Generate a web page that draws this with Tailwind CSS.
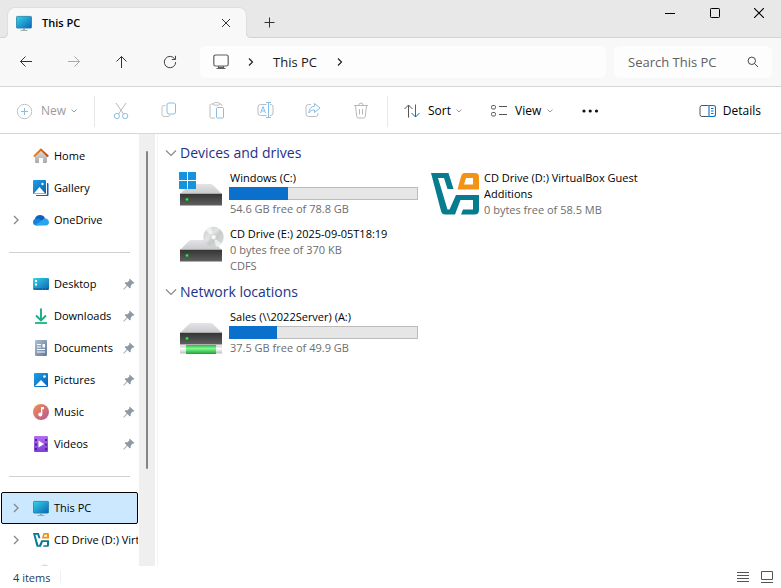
<!DOCTYPE html>
<html lang="en">
<head>
<meta charset="utf-8">
<meta name="viewport" content="width=device-width, initial-scale=1">
<title>This PC</title>
<script src="https://cdn.jsdelivr.net/npm/@tailwindcss/browser@4"></script>
</head>
<body class="flex h-screen flex-col overflow-hidden bg-white font-['Open_Sans','Noto_Sans',sans-serif] text-[11px] leading-4 text-black">

<!-- Shared symbols -->
<svg class="absolute size-0" aria-hidden="true">
  <defs>
    <linearGradient id="gScreen" x1="0" y1="0" x2="1" y2="1"><stop offset="0" stop-color="#35d6e4"/><stop offset="1" stop-color="#0b62b8"/></linearGradient>
    <linearGradient id="gBlue" x1="0" y1="0" x2="1" y2="1"><stop offset="0" stop-color="#1fa0e6"/><stop offset="1" stop-color="#0661b8"/></linearGradient>
    <linearGradient id="gGray" x1="0" y1="0" x2="0" y2="1"><stop offset="0" stop-color="#dedede"/><stop offset="1" stop-color="#a9a9a9"/></linearGradient>
    <linearGradient id="gRoof" x1="0" y1="0" x2="1" y2="0"><stop offset="0" stop-color="#f08a24"/><stop offset="1" stop-color="#c8440b"/></linearGradient>
    <linearGradient id="gDoc" x1="0" y1="0" x2="1" y2="1"><stop offset="0" stop-color="#a9bfd3"/><stop offset="1" stop-color="#62799a"/></linearGradient>
    <linearGradient id="gMusic" x1="0" y1="0" x2="1" y2="1"><stop offset="0" stop-color="#f0924c"/><stop offset="1" stop-color="#b4559a"/></linearGradient>
    <linearGradient id="gVideo" x1="0" y1="0" x2="0" y2="1"><stop offset="0" stop-color="#b46cf0"/><stop offset="1" stop-color="#7d3fd8"/></linearGradient>
    <linearGradient id="gTop" x1="0" y1="0" x2="0" y2="1"><stop offset="0" stop-color="#e3e4e8"/><stop offset="1" stop-color="#c9c9cc"/></linearGradient>
    <linearGradient id="gFront" x1="0" y1="0" x2="0" y2="1"><stop offset="0" stop-color="#333"/><stop offset="1" stop-color="#606060"/></linearGradient>
    <linearGradient id="gPipe" x1="0" y1="0" x2="0" y2="1"><stop offset="0" stop-color="#2bb84a"/><stop offset=".4" stop-color="#7dfa8c"/><stop offset="1" stop-color="#1f9e3c"/></linearGradient>
    <linearGradient id="gPipeEnd" x1="0" y1="0" x2="0" y2="1"><stop offset="0" stop-color="#c8c8c8"/><stop offset=".4" stop-color="#fff"/><stop offset="1" stop-color="#bdbdbd"/></linearGradient>
    <linearGradient id="gDisc" x1="0" y1="0" x2="1" y2="1"><stop offset="0" stop-color="#c9c9cb"/><stop offset=".4" stop-color="#e4e4e6"/><stop offset=".55" stop-color="#c6cbc8"/><stop offset="1" stop-color="#dedee0"/></linearGradient>
  </defs>
  <symbol id="pc" viewBox="0 0 16 16"><rect x=".4" y="1.4" width="15.2" height="11.7" rx="1" fill="url(#gScreen)" stroke="#1a7fa6" stroke-width=".8"/><path d="M7 13.5h2v1.8H7z" fill="#9aa5ad"/><path d="M4.5 15.4h7" stroke="#9aa5ad"/></symbol>
  <symbol id="expand" viewBox="0 0 8 10"><path d="M2 1l4 4-4 4" fill="none" stroke="#8a8a8a" stroke-width="1.4"/></symbol>
  <symbol id="caret" viewBox="0 0 8 6"><path d="M1.500 1.500l2.500 2.500 2.500-2.500" fill="none" stroke="currentColor"/></symbol>
  <symbol id="chev" viewBox="0 0 6 10"><path d="M1 1.500l3.500 3.500-3.500 3.500" fill="none" stroke="#222" stroke-width="1.200"/></symbol>
  <symbol id="group" viewBox="0 0 12 8"><path d="M1 1.500l5 5 5-5" fill="none" stroke="#8a8a8a" stroke-width="1.200"/></symbol>
  <symbol id="pin" viewBox="0 0 12 12"><path d="M6.600.6L11.400 5l-1.100.8-.6-.2-2 2.100.1 1.900-.9.9-2.500-2.400L1 11.600H.4V11l3.400-3.500-2.200-2.400.9-.9 2 .1 2-2-.2-.7z" fill="#8d99a3"/></symbol>
  <symbol id="vbox" viewBox="0 0 48 42"><path d="M0 0H17.500L22.500 16H16.500L13 5H7L16.500 36.500H18.500L25 22H48V37Q48 41.500 43.500 41.500H30L32 36.500H42V27H29.500L24 41.500H14Q11 41.500 10 38Z" fill="#077c8f"/><path fill-rule="evenodd" d="M33.500 0H44Q48 0 48 4V16.500H26.500L30 3.500Q31 0 33.500 0zM35 5L33 11.500H42V5z" fill="#f39313"/></symbol>
  <symbol id="drive" viewBox="0 0 42 24"><path d="M9 1Q10 0 11.500 0H30.500Q32 0 33 1L42 10H0z" fill="url(#gTop)"/><path d="M0 9.500H42V21.500H0z" fill="url(#gFront)"/><path d="M0 9.500H42" stroke="#aaa"/><circle cx="7" cy="15.500" r="1.900" fill="#22722f"/><circle cx="7" cy="15.500" r="1.300" fill="#31e943"/></symbol>
</svg>

<!-- Title bar -->
<header class="flex h-[38px] shrink-0 border-b border-[#d4d4d4] bg-[#e8e8e8]">
  <div class="relative mt-[7px] -mb-px ml-[7px] flex w-60 items-center rounded-t-lg border-x border-t border-[#dedede] bg-[#f8f8f8] pr-3 pl-2">
    <svg class="absolute -left-[5px] bottom-0" width="5" height="5" aria-hidden="true"><path d="M5 0V5H0V4.500Q4.500 4.500 4.500 0z" fill="#f8f8f8"/><path d="M0 4.500Q4.500 4.500 4.500 0" fill="none" stroke="#d4d4d4"/></svg>
    <svg class="absolute -right-[5px] bottom-0" width="5" height="5" aria-hidden="true"><path d="M0 0V5H5V4.500Q.5 4.500 .5 0z" fill="#f8f8f8"/><path d="M5 4.500Q.5 4.500 .5 0" fill="none" stroke="#d4d4d4"/></svg>
    <svg width="16" height="16" aria-hidden="true"><use href="#pc"/></svg>
    <span class="ml-[10px] flex-1 font-semibold">This PC</span>
    <button aria-label="Close tab" class="flex size-4 items-center justify-center"><svg width="10" height="10"><path d="M1 1l8 8M9 1L1 9" stroke="#333"/></svg></button>
  </div>
  <button aria-label="New tab" class="mt-[7px] flex w-[45px] items-center justify-center"><svg width="11" height="11"><path d="M5.500 0.500v10M.5 5.500h10" stroke="#333"/></svg></button>
  <div class="ml-auto flex h-[26px]">
    <button aria-label="Minimize" class="flex w-[46px] items-center justify-center"><svg width="10" height="10"><path d="M0 5.500h10" stroke="#000"/></svg></button>
    <button aria-label="Maximize" class="flex w-11 items-center justify-center"><svg width="10" height="10"><rect x=".5" y=".5" width="9" height="9" rx=".8" fill="none" stroke="#000"/></svg></button>
    <button aria-label="Close" class="flex w-11 items-center justify-center"><svg width="10" height="10"><path d="M0 0l10 10M10 0L0 10" stroke="#000" stroke-width="1.100"/></svg></button>
  </div>
</header>

<!-- Navigation -->
<nav class="flex h-[49px] shrink-0 items-center gap-2 border-b border-[#d6d6d6] bg-[#f8f8f8] pr-[9px] pl-0.5 text-[13px]">
  <div class="-mr-1 flex">
    <button aria-label="Back" class="flex w-12 justify-center"><svg width="14" height="14" fill="none" stroke="#333"><path d="M13 6.500H1.500M6.500 1.500L1.500 6.500l5 5"/></svg></button>
    <button aria-label="Forward" class="flex w-12 justify-center"><svg width="14" height="14" fill="none" stroke="#aaa"><path d="M1 6.500h11.500M7.500 1.500L12.500 6.500l-5 5"/></svg></button>
    <button aria-label="Up" class="flex w-12 justify-center"><svg width="14" height="14" fill="none" stroke="#333"><path d="M6.500 13V1.500M1.500 6.500L6.500 1.500l5 5"/></svg></button>
    <button aria-label="Refresh" class="flex w-12 justify-center"><svg width="14" height="14" fill="none" stroke="#444"><path d="M11.800 4A5.700 5.700 0 1 0 12.700 7M12.500 .8V4.500H8.800"/></svg></button>
  </div>
  <div class="ml-0.5 flex h-8 flex-1 items-center rounded-md bg-[#fdfdfd] pl-[13px]">
    <svg width="16" height="16" fill="none" stroke="#606060" stroke-width="1.200" aria-hidden="true"><rect x=".8" y="1" width="14.400" height="11" rx="1.800"/><path d="M5.500 12v2M10.500 12v2M3.500 14.500h9M6 13.300h4"/></svg>
    <svg class="ml-[19px]" width="6" height="10" aria-hidden="true"><use href="#chev"/></svg>
    <a href="#" class="ml-[19px] text-[#1a1a1a]">This PC</a>
    <svg class="ml-5" width="6" height="10" aria-hidden="true"><use href="#chev"/></svg>
  </div>
  <label class="flex h-8 w-[158px] items-center rounded-md bg-[#fdfdfd] pr-[13px] pl-[14px]">
    <input type="search" aria-label="Search This PC" placeholder="Search This PC" class="min-w-0 flex-1 bg-transparent outline-none placeholder:text-[#616161]">
    <svg width="12" height="12" fill="none" stroke="#444" aria-hidden="true"><circle cx="4.800" cy="4.800" r="3.700"/><path d="M7.500 7.500L11 11"/></svg>
  </label>
</nav>

<!-- Command bar -->
<div role="toolbar" aria-label="Commands" class="flex h-[47px] shrink-0 items-center border-b border-[#d8d8d8] pt-0.5 pr-5 pl-4 text-[12px]">
  <button disabled class="flex items-center text-[#9c9c9c]">
    <svg width="17" height="17" fill="none"><circle cx="8.500" cy="8.500" r="7.200" stroke="#c2c2c2"/><path d="M8.500 5v7M5 8.500h7" stroke="#84bfea"/></svg>
    <span class="ml-2 w-[29px] text-left">New</span><svg width="8" height="6"><use href="#caret"/></svg>
  </button>
  <span class="mr-0.5 ml-4 h-[31px] w-px bg-[#e8e8e8]"></span>
  <div class="flex">
    <button disabled aria-label="Cut" class="flex w-12 justify-center"><svg width="16" height="18" fill="none"><path d="M3 1l7.500 11M13 1L5.500 12" stroke="#b8b8b8"/><circle cx="3.800" cy="14" r="2.600" stroke="#84bfea"/><circle cx="12.200" cy="14" r="2.600" stroke="#84bfea"/></svg></button>
    <button disabled aria-label="Copy" class="flex w-12 justify-center"><svg width="16" height="16" fill="none"><path d="M4.500 3.500H3a2 2 0 0 0-2 2v7a2 2 0 0 0 2 2h4a2 2 0 0 0 2-1.500" stroke="#c2c2c2"/><rect x="6" y="1" width="8.500" height="11" rx="2" stroke="#84bfea"/></svg></button>
    <button disabled aria-label="Paste" class="flex w-12 justify-center"><svg width="16" height="17" fill="none"><path d="M5 2H2.500A1.500 1.500 0 0 0 1 3.500v11A1.500 1.500 0 0 0 2.500 16H6M10 2h1.500A1.500 1.500 0 0 1 13 3.500V4" stroke="#bcbcbc"/><rect x="4.500" y=".6" width="6" height="2.600" rx="1.200" stroke="#bcbcbc"/><rect x="7.500" y="5.500" width="7" height="10.500" rx="1" stroke="#84bfea"/></svg></button>
    <button disabled aria-label="Rename" class="flex w-12 justify-center"><svg width="17" height="16" fill="none"><path d="M9.500 2.500H3.500a2.500 2.500 0 0 0-2.500 2.500v6a2.500 2.500 0 0 0 2.500 2.500h6M13 2.500a2.500 2.500 0 0 1 3 2.500v6a2.500 2.500 0 0 1-3 2.500" stroke="#bcbcbc"/><path d="M9 .5h5M9 15.500h5M11.500.5v15M3.500 11l2.500-6.500L8.500 11M4.500 9h3" stroke="#84bfea"/></svg></button>
    <button disabled aria-label="Share" class="flex w-12 justify-center"><svg width="16" height="16" fill="none"><path d="M6 2.500H3.500A2.500 2.500 0 0 0 1 5v7a2.500 2.500 0 0 0 2.500 2.500h7A2.500 2.500 0 0 0 13 12v-1" stroke="#bcbcbc"/><path d="M9.500 1.500L15 6l-5.500 4.500V8C6.500 8 5 9 3.800 11 4 7 6 4.500 9.500 4.200z" stroke="#84bfea" stroke-linejoin="round"/></svg></button>
    <button disabled aria-label="Delete" class="flex w-12 justify-center"><svg width="16" height="17" fill="none" stroke="#b8b8b8"><path d="M1 3.500h14M5.500 3.500Q6 1 8 1t2.500 2.500M2.500 3.500l1.200 11Q3.900 16 5.300 16h5.400q1.400 0 1.600-1.500l1.200-11M6.500 7v5.500M9.500 7v5.500"/></svg></button>
  </div>
  <span class="mr-4 ml-0.5 h-[31px] w-px bg-[#e8e8e8]"></span>
  <button class="flex items-center">
    <svg width="17" height="14" fill="none"><path d="M4.500 13.500V1M.5 5l4-4 4 4" stroke="#555"/><path d="M11.500 .5V13M7.500 9l4 4 4-4" stroke="#0a72c8"/></svg>
    <span class="ml-[7px] w-[27px] text-left">Sort</span><svg class="text-[#999]" width="8" height="6"><use href="#caret"/></svg>
  </button>
  <button class="ml-7 flex items-center">
    <svg width="17" height="14" fill="none" stroke="#555"><rect x=".5" y="1.500" width="4" height="3.500" rx="1.300"/><rect x=".5" y="8.500" width="4" height="3.500" rx="1.300"/><path d="M8 2.500h8M8 10.500h8"/></svg>
    <span class="ml-[7px] w-[31px] text-left">View</span><svg class="text-[#999]" width="8" height="6"><use href="#caret"/></svg>
  </button>
  <button aria-label="See more" class="ml-7 flex"><svg width="18" height="4" fill="#111"><circle cx="2" cy="2" r="1.600"/><circle cx="8.200" cy="2" r="1.600"/><circle cx="14.500" cy="2" r="1.600"/></svg></button>
  <button class="ml-auto flex items-center">
    <svg width="17" height="14" fill="none"><path d="M9.500 1.500H3a2 2 0 0 0-2 2v7a2 2 0 0 0 2 2h6.500" stroke="#555"/><path d="M10 1.500H14.500a2 2 0 0 1 2 2v7a2 2 0 0 1-2 2H10zM12 4.500h2.500M12 7h2.500M12 9.500h2.500" stroke="#0a72c8" stroke-width="1.100"/></svg>
    <span class="ml-[7px]">Details</span>
  </button>
</div>

<div class="flex min-h-0 flex-1">
  <!-- Navigation pane -->
  <aside class="w-[139px] shrink-0 overflow-hidden pt-[6px]">
    <ul class="whitespace-nowrap">
      <li class="flex h-8 items-center pl-[33px]"><svg width="16" height="16"><path d="M2 7.500L8 2l6 5.500V14a1 1 0 0 1-1 1h-3v-5H6v5H3a1 1 0 0 1-1-1z" fill="url(#gGray)"/><path d="M.8 8.500L8 1.600l7.200 6.900" fill="none" stroke="url(#gRoof)" stroke-width="2"/></svg><a href="#" class="ml-[5px]">Home</a></li>
      <li class="flex h-8 items-center pl-[33px]"><svg width="16" height="16"><path d="M3 3h11.500a1 1 0 0 1 1 1v11a1 1 0 0 1-1 1H3z" fill="#0c62b5"/><rect width="14" height="15" rx="1" fill="#fff"/><rect width="13" height="14" rx="1" fill="url(#gBlue)"/><path d="M.8 13.500L6.500 7l5.700 6.500z" fill="#fff"/><circle cx="9.500" cy="4" r="1.200" fill="#fff"/></svg><a href="#" class="ml-[5px]">Gallery</a></li>
      <li class="flex h-8 items-center pl-3"><svg width="8" height="10"><use href="#expand"/></svg><svg class="ml-[13px]" width="16" height="16"><path d="M2.500 9.500A5 4.500 0 0 1 7 3q3.500 0 5 3.300L8 10z" fill="#0d5fc0"/><path d="M0 10.200Q.2 6.800 3.700 6.600 6 6.600 8 8l5 4.500-9.500 1Q0 13 0 10.200" fill="#1482dc"/><path d="M2 13l9-6q1-.8 2-.6 2.800.8 3 3.600 0 3.400-3.200 3.500H3.600z" fill="#28a5ee"/></svg><a href="#" class="ml-[5px]">OneDrive</a></li>
      <li role="separator" class="flex h-8 items-center pr-[9px] pl-[9px]"><span class="h-px flex-1 bg-[#d0d0d0]"></span></li>
      <li class="flex h-8 items-center pr-1 pl-[33px]"><svg width="16" height="16"><rect y="2" width="16" height="12" rx="1" fill="url(#gScreen)"/><path d="M2 4h2v2H2zM2 7.500h2v2H2z" fill="#fff"/><path d="M1 13h14" stroke="#0b4f90" stroke-dasharray="8 1 2 1"/></svg><a href="#" class="ml-[5px] flex-1">Desktop</a><svg width="12" height="12"><use href="#pin"/></svg></li>
      <li class="flex h-8 items-center pr-1 pl-[33px]"><svg width="16" height="16" fill="none" stroke="#16ac87" stroke-width="1.900"><path d="M8 .5V12M3 7.500l5 5 5-5"/><path d="M2 15h12" stroke="#23b98a"/></svg><a href="#" class="ml-[5px] flex-1">Downloads</a><svg width="12" height="12"><use href="#pin"/></svg></li>
      <li class="flex h-8 items-center pr-1 pl-[33px]"><svg width="16" height="16"><rect x="2" width="12" height="16" rx="1" fill="url(#gDoc)"/><path d="M4 4.500h4M4 7h4M4 9.500h8M4 12h8" stroke="#fff"/><path d="M9.500 4h2.500v3.500H9.500z" fill="#fff"/></svg><a href="#" class="ml-[5px] flex-1">Documents</a><svg width="12" height="12"><use href="#pin"/></svg></li>
      <li class="flex h-8 items-center pr-1 pl-[33px]"><svg width="16" height="16"><rect x="1" y="1" width="14" height="14" rx="1" fill="url(#gBlue)"/><path d="M2 14l6-6 6 6z" fill="#fff"/><circle cx="11.500" cy="4.500" r="1.300" fill="#fff"/></svg><a href="#" class="ml-[5px] flex-1">Pictures</a><svg width="12" height="12"><use href="#pin"/></svg></li>
      <li class="flex h-8 items-center pr-1 pl-[33px]"><svg width="16" height="16"><circle cx="8" cy="8" r="8" fill="url(#gMusic)"/><path d="M8 3h3v2.200H9.300V10.500H8z" fill="#fff"/><circle cx="7.300" cy="10.600" r="2" fill="#fff"/></svg><a href="#" class="ml-[5px] flex-1">Music</a><svg width="12" height="12"><use href="#pin"/></svg></li>
      <li class="flex h-8 items-center pr-1 pl-[33px]"><svg width="16" height="16"><rect x="1" width="14" height="16" rx="1" fill="url(#gVideo)"/><path d="M3 3v11M13 3v11" stroke="#3d1a80" stroke-width="1.600" stroke-dasharray="2 2.500"/><path d="M5.500 4.500L11 8l-5.500 3.500z" fill="#fff"/></svg><a href="#" class="ml-[5px] flex-1">Videos</a><svg width="12" height="12"><use href="#pin"/></svg></li>
      <li role="separator" class="flex h-8 items-center pr-[9px] pl-[9px]"><span class="h-px flex-1 bg-[#d0d0d0]"></span></li>
      <li class="mr-px ml-px flex h-8 items-center rounded-xs border border-black bg-[#cce8ff] pl-[10px]"><svg width="8" height="10"><use href="#expand"/></svg><svg class="ml-[13px]" width="16" height="16"><use href="#pc"/></svg><a href="#" aria-current="page" class="ml-[5px]">This PC</a></li>
      <li class="mr-px flex h-8 items-center overflow-hidden pl-3"><svg class="shrink-0" width="8" height="10"><use href="#expand"/></svg><svg class="ml-[13px] shrink-0" width="16" height="14"><use href="#vbox"/></svg><a href="#" class="ml-[5px]">CD Drive (D:) VirtualBox Guest Additions</a></li>
      <li class="flex h-8 items-center pl-[33px]"><svg width="24" height="16"><circle cx="12" cy="5" r="4.500" fill="#d5dbe1"/><path d="M1 10h14v5H1z" fill="#555"/></svg></li>
    </ul>
  </aside>
  <div class="flex w-4 shrink-0 justify-center bg-[#efefef] pt-[17px] pb-[97px]" aria-hidden="true"><span class="w-0.5 rounded-sm bg-[#858585]"></span></div>

  <!-- Drives -->
  <main class="ml-0.5 min-w-0 flex-1 overflow-hidden border-l border-[#f3f3f3] pt-[5px]">
    <section>
      <h2 class="flex h-[27px] items-center pl-[7px] text-[14px] text-[#1e3287]"><svg width="12" height="8" aria-hidden="true"><use href="#group"/></svg><span class="ml-[3px]">Devices and drives</span></h2>
      <ul class="grid grid-cols-[repeat(auto-fill,254px)] pl-[21px]">
        <li class="flex h-14 py-1 pr-[15px]">
          <svg class="mr-[5px] shrink-0" width="45" height="48" aria-hidden="true"><use href="#drive" x="1" y="14" width="42" height="24"/><path d="M0 2h8v8H0zM9 2h8v8H9zM0 11h8v8H0zM9 11h8v8H9z" fill="#1593df"/></svg>
          <div class="min-w-0 flex-1"><p class="pl-px">Windows (C:)</p><div role="progressbar" aria-label="Used space" aria-valuenow="31" class="mt-px mb-px h-[13px] border border-[#bcbcbc] bg-[#e6e6e6]"><div class="-my-px -ml-px h-[13px] bg-[#0b70cb]" style="width:31.500%"></div></div><p class="pl-px text-[#6d6d6d]">54.6 GB free of 78.8 GB</p></div>
        </li>
        <li class="flex h-14 py-1">
          <svg class="mt-[3px] mr-[5px] -ml-0.5 shrink-0" width="48" height="42" aria-hidden="true"><use href="#vbox"/></svg>
          <div class="w-[170px]"><p>CD Drive (D:) VirtualBox Guest Additions</p><p class="text-[#6d6d6d]">0 bytes free of 58.5 MB</p></div>
        </li>
        <li class="flex h-14 py-1">
          <svg class="mr-[6px] shrink-0" width="45" height="48" aria-hidden="true"><use href="#drive" x="1" y="14" width="42" height="24"/><circle cx="34.500" cy="11" r="10" fill="url(#gDisc)" stroke="#d0d0d0" stroke-width=".5"/><path d="M34.500 11L27 4.500Q29 2 32 1.300zM34.500 11L42 17.500Q40 20 37 20.700z" fill="#fff" opacity=".6"/><circle cx="34.500" cy="11" r="3" fill="#eee" stroke="#bbb" stroke-width=".6"/><circle cx="34.500" cy="11" r="1.200" fill="#fff"/></svg>
          <div><p>CD Drive (E:) 2025-09-05T18:19</p><p class="text-[#6d6d6d]">0 bytes free of 370 KB</p><p class="text-[#6d6d6d]">CDFS</p></div>
        </li>
      </ul>
    </section>
    <section>
      <h2 class="flex h-[27px] items-center pl-[7px] text-[14px] text-[#1e3287]"><svg width="12" height="8" aria-hidden="true"><use href="#group"/></svg><span class="ml-[3px]">Network locations</span></h2>
      <ul class="grid grid-cols-[repeat(auto-fill,254px)] pl-[21px]">
        <li class="flex h-14 py-1 pr-[15px]">
          <svg class="mr-[5px] shrink-0" width="45" height="48" aria-hidden="true"><use href="#drive" x="1" y="14" width="42" height="24"/><path d="M1 36.500h42v8H1z" fill="url(#gPipeEnd)"/><path d="M7 36h30v9H7z" fill="url(#gPipe)"/></svg>
          <div class="min-w-0 flex-1"><p class="pl-px">Sales (\\2022Server) (A:)</p><div role="progressbar" aria-label="Used space" aria-valuenow="25" class="mt-px mb-px h-[13px] border border-[#bcbcbc] bg-[#e6e6e6]"><div class="-my-px -ml-px h-[13px] bg-[#0b70cb]" style="width:25.500%"></div></div><p class="pl-px text-[#6d6d6d]">37.5 GB free of 49.9 GB</p></div>
        </li>
      </ul>
    </section>
  </main>
</div>

<!-- Status bar -->
<footer class="flex h-[22px] shrink-0 items-center pr-2 pl-[13px] text-[#1e3a5f]">
  <span class="mt-0.5">4 items</span><span class="ml-[10px] h-3 w-px bg-[#f0f0f0]"></span>
  <button aria-label="Details view" class="ml-auto flex"><svg width="12" height="12"><path d="M0 1.500h12M0 4.500h12M0 7.500h12M0 10.500h12" stroke="#555"/></svg></button>
  <button aria-label="Large icons view" class="ml-3 flex"><svg width="12" height="12"><path d="M.5.5h11v8H.5zM0 11.500h12" fill="none" stroke="#555"/></svg></button>
</footer>
</body>
</html>
